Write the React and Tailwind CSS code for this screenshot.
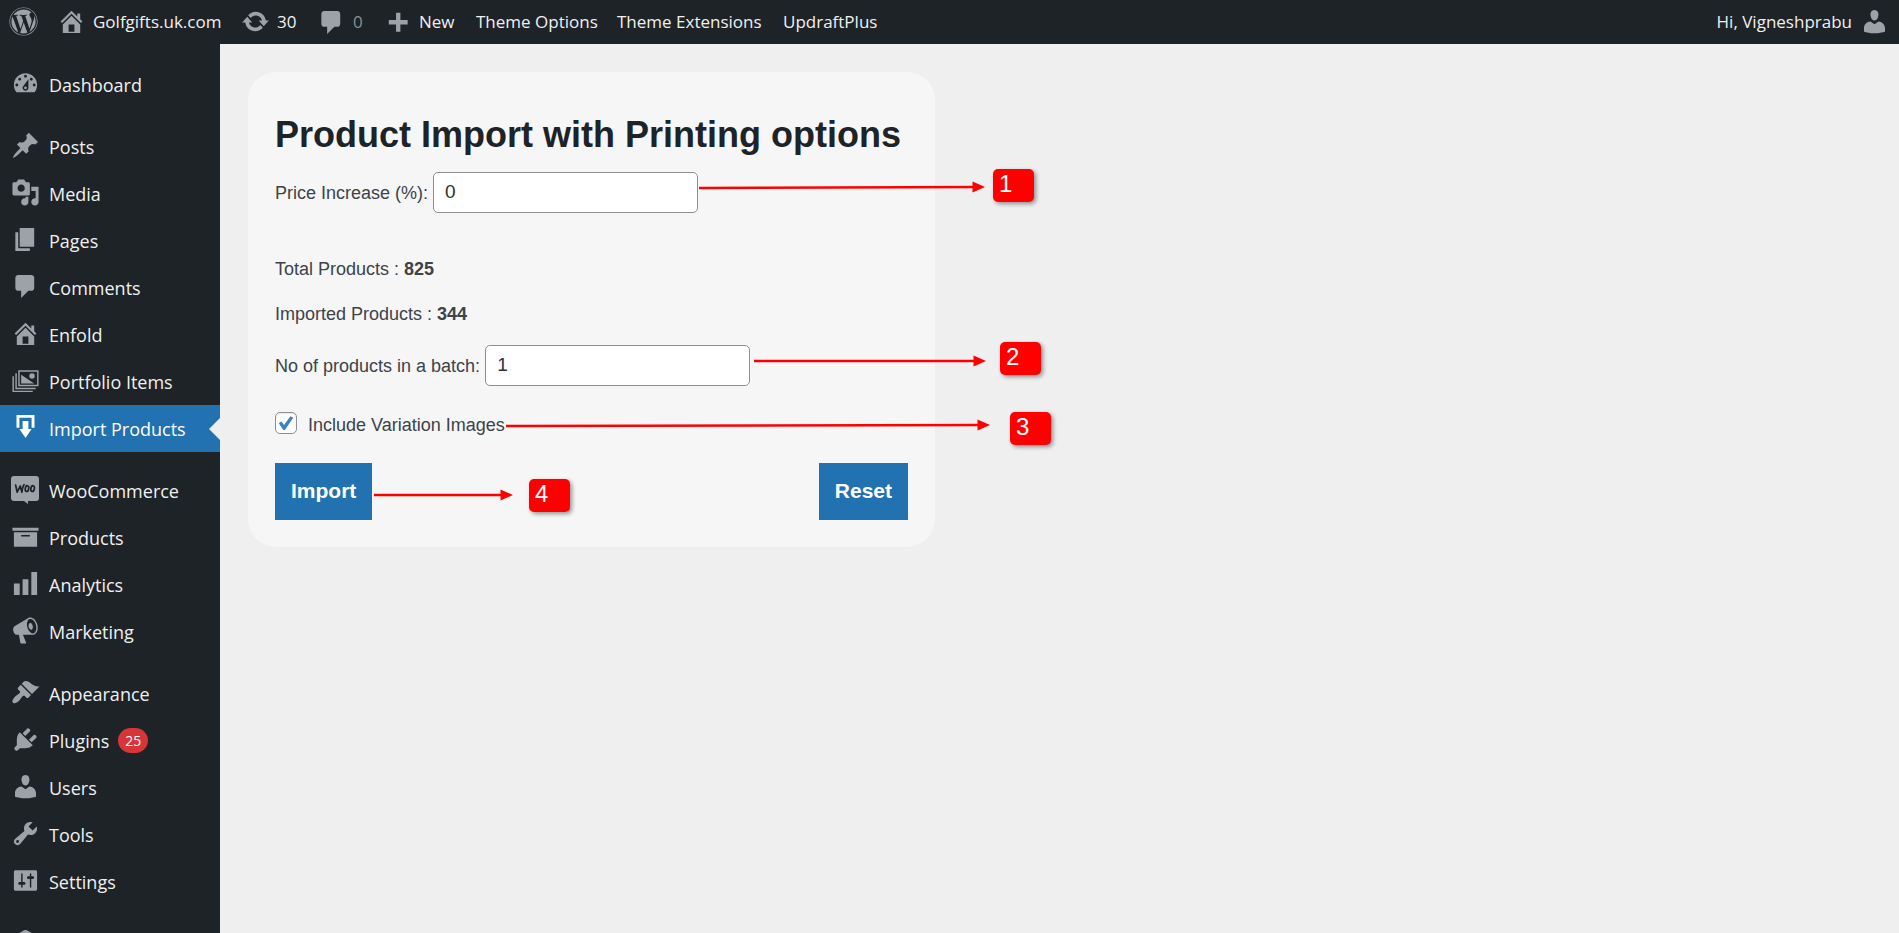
import { useState } from 'react';
import { FaWordpress } from 'react-icons/fa';

const ICONS = {
  dashboard:
    'M3.76 16h12.48c1.1-1.37 1.76-3.11 1.76-5 0-4.42-3.58-8-8-8s-8 3.58-8 8c0 1.89.66 3.63 1.76 5zM10 4c.55 0 1 .45 1 1s-.45 1-1 1-1-.45-1-1 .45-1 1-1zM6 6c.55 0 1 .45 1 1s-.45 1-1 1-1-.45-1-1 .45-1 1-1zm8 0c.55 0 1 .45 1 1s-.45 1-1 1-1-.45-1-1 .45-1 1-1zm-5.37 5.55L12 7v6c0 1.1-.9 2-2 2s-2-.9-2-2c0-.57.24-1.08.63-1.45zM4 10c.55 0 1 .45 1 1s-.45 1-1 1-1-.45-1-1 .45-1 1-1zm12 0c.55 0 1 .45 1 1s-.45 1-1 1-1-.45-1-1 .45-1 1-1zm-5 3c0-.55-.45-1-1-1s-1 .45-1 1 .45 1 1 1 1-.45 1-1z',
  post: 'M10.44 3.02l1.82-1.82 6.36 6.35-1.83 1.82c-1.05-.68-2.48-.57-3.41.36l-.75.75c-.92.93-1.04 2.35-.35 3.41l-1.83 1.82-2.41-2.41-2.8 2.79c-.42.42-3.38 2.71-3.8 2.29s1.86-3.39 2.28-3.81l2.79-2.79L4.1 9.36l1.83-1.82c1.05.69 2.48.57 3.4-.36l.75-.75c.93-.92 1.05-2.35.36-3.41z',
  media:
    'M13 11V4c0-.55-.45-1-1-1h-1.67L9 1H5L3.67 3H2c-.55 0-1 .45-1 1v7c0 .55.45 1 1 1h10c.55 0 1-.45 1-1zM7 4.5c1.38 0 2.5 1.12 2.5 2.5S8.38 9.5 7 9.5 4.5 8.38 4.5 7 5.62 4.5 7 4.5zM14 6h5v10.5c0 1.38-1.12 2.5-2.5 2.5S14 17.88 14 16.5s1.12-2.5 2.5-2.5c.17 0 .34.02.5.05V9h-3V6zm-4 8.05V13h2v3.5c0 1.38-1.12 2.5-2.5 2.5S7 17.88 7 16.5 8.12 14 9.5 14c.17 0 .34.02.5.05z',
  page: 'M6 15V2h10v13H6zm-1 1h8v2H3V5h2v11z',
  comment: 'M5 2h9c1.1 0 2 .9 2 2v7c0 1.1-.9 2-2 2h-2l-5 5v-5H5c-1.1 0-2-.9-2-2V4c0-1.1.9-2 2-2z',
  home: 'M16 8.5l1.53 1.53-1.06 1.06L10 4.6l-6.47 6.49-1.06-1.06L10 2.5l4 4v-2h2v4zm-6-2.46l6 5.99V18H4v-5.97zM12 17v-5H8v5h4z',
  images:
    'M5 3h14v11H5V3zm13 10V4H6v9h12zM7 6l9 6H7V6zm7.5-1a1.9 1.9 0 1 1 0 3.8a1.9 1.9 0 1 1 0-3.8zM3 5h1v10h13v1H3V5zM1 7h1v10h13v1H1V7z',
  importBox: 'M3.8 1.4h12.4v8.7h-2V3.3H5.8v6.8h-2zM8 5.500h4v5.500h2.200L10 17.200 5.800 11H8z',
  archive: 'M19 4v2H1V4h18zM2 7h16v10H2V7zm11 3V9H7v1h6z',
  chart: 'M18 18V2h-4v16h4zm-6 0V7H8v11h4zm-6 0v-8H2v8h4z',
  megaphone:
    'M18.15 5.94c.46 1.62.38 3.22-.02 4.48-.42 1.28-1.26 2.18-2.3 2.48-.16.06-.26.06-.4.06-.06.02-.12.02-.18.02-.06.02-.14.02-.22.02h-6.8l2.22 5.5c.02.14-.06.26-.14.34-.08.1-.24.16-.34.16H6.95c-.1 0-.26-.06-.34-.16-.08-.08-.16-.2-.14-.34l-1-5.5H4.25l-.02-.02c-.5.06-1.08-.18-1.54-.62s-.88-1.08-1.06-1.88c-.24-.8-.2-1.56-.02-2.2.18-.62.58-1.08 1.06-1.3l.02-.02 9-5.4c.1-.06.18-.1.24-.16.06-.04.14-.08.24-.12.16-.08.28-.12.5-.18 1.04-.3 2.24.1 3.22.98s1.84 2.24 2.26 3.86zm-2.58 5.98h-.02c.4-.1.74-.34 1.04-.7.58-.7.86-1.76.86-3.04 0-.64-.1-1.3-.28-1.98-.34-1.36-1.02-2.5-1.78-3.24s-1.68-1.1-2.46-.88c-.82.22-1.4.96-1.7 2-.32 1.04-.28 2.36.06 3.72.38 1.36 1 2.5 1.8 3.24.78.74 1.62 1.1 2.48.88zm-2.54-7.08c.22-.04.42-.02.62.04.38.16.76.48 1.02 1s.42 1.2.42 1.78c0 .3-.04.56-.12.8-.18.48-.44.84-.86.94-.34.1-.8-.06-1.14-.4s-.64-.86-.78-1.5c-.18-.62-.12-1.24.02-1.72s.48-.84.82-.94z',
  brush:
    'M14.48 11.06L7.41 3.99l1.5-1.5c.5-.56 2.3-.47 3.51.32 1.21.8 1.43 1.28 2.91 2.1 1.18.64 2.45 1.26 4.45.85zm-.71.71L6.7 4.7 4.93 6.47c-.39.39-.39 1.02 0 1.41l1.06 1.06c.39.39.39 1.03 0 1.42-.6.6-1.43 1.11-2.21 1.69-.35.26-.7.53-1.01.84C1.43 14.23.4 16.08 1.4 17.07c.99 1 2.84-.03 4.18-1.36.31-.31.58-.66.85-1.02.57-.78 1.08-1.61 1.69-2.21.39-.39 1.02-.39 1.41 0l1.06 1.06c.39.39 1.02.39 1.41 0z',
  plug: 'M13.11 4.36L9.87 7.6 8 5.73l3.24-3.24c.35-.34 1.05-.2 1.56.32.52.51.66 1.21.31 1.55zm-8 1.77l.91-1.12 9.01 9.01-1.19.84c-.71.71-2.63 1.16-3.82 1.16H6.14L4.9 17.26c-.59.59-1.54.59-2.12 0-.59-.58-.59-1.53 0-2.12l1.24-1.24v-3.88c0-1.13.4-3.19 1.09-3.89zm7.26 3.97l3.24-3.24c.34-.35 1.04-.21 1.55.31.52.51.66 1.21.31 1.55l-3.24 3.25z',
  user: 'M10 9.25c-2.27 0-2.73-3.44-2.73-3.44C7 4.02 7.82 2 9.97 2c2.16 0 2.98 2.02 2.71 3.81 0 0-.41 3.44-2.68 3.44zm0 2.57L12.72 10c2.39 0 4.52 2.33 4.52 4.53v2.49s-3.65 1.13-7.24 1.13c-3.65 0-7.24-1.13-7.24-1.13v-2.49c0-2.25 1.94-4.48 4.47-4.48z',
  wrench:
    'M16.68 9.77c-1.34 1.34-3.3 1.67-4.95.99l-5.41 6.52c-.99.99-2.59.99-3.58 0s-.99-2.59 0-3.57l6.52-5.42c-.68-1.65-.35-3.61.99-4.95 1.28-1.28 3.12-1.62 4.72-1.06l-2.89 2.89 2.82 2.82 2.86-2.87c.53 1.58.18 3.39-1.08 4.65zM3.81 16.21c.4.39 1.04.39 1.43 0 .4-.4.4-1.04 0-1.43-.39-.4-1.03-.4-1.43 0-.39.39-.39 1.03 0 1.43z',
  settings:
    'M18 16V4c0-.55-.45-1-1-1H3c-.55 0-1 .45-1 1v12c0 .55.45 1 1 1h14c.55 0 1-.45 1-1zM8 11h1c.55 0 1 .45 1 1s-.45 1-1 1H8v1.5c0 .28-.22.5-.5.5s-.5-.22-.5-.5V13H6c-.55 0-1-.45-1-1s.45-1 1-1h1V5.5c0-.28.22-.5.5-.5s.5.22.5.5V11zm5-2h-1c-.55 0-1-.45-1-1s.45-1 1-1h1V5.5c0-.28.22-.5.5-.5s.5.22.5.5V7h1c.55 0 1 .45 1 1s-.45 1-1 1h-1v5.5c0 .28-.22.5-.5.5s-.5-.22-.5-.5V9z',
  update:
    'M10.2 3.28c3.53 0 6.43 2.61 6.92 6h2.08l-3.5 4-3.5-4h2.32c-.45-1.97-2.21-3.45-4.32-3.45-1.45 0-2.73.71-3.54 1.78L4.95 5.66C6.23 4.2 8.11 3.28 10.2 3.28zm-.4 13.44c-3.52 0-6.43-2.61-6.92-6H.8l3.5-4c1.17 1.33 2.33 2.67 3.5 4H5.48c.45 1.97 2.21 3.45 4.32 3.45 1.45 0 2.73-.71 3.54-1.78l1.71 1.95c-1.28 1.46-3.15 2.38-5.25 2.38z',
  plus: 'M17 9v3h-5v5H9v-5H4V9h5V4h3v5h5z',
  hexagon: 'M9 1.600q1-.6 2 0l6 3.400v9l-7 4-7-4V5z',
};

function Icon({ name }) {
  return (
    <svg viewBox="0 0 20 20" className="size-[29px] shrink-0" fill="currentColor" fillRule="evenodd" aria-hidden="true">
      <path d={ICONS[name]} />
    </svg>
  );
}

function WooIcon() {
  return (
    <svg viewBox="0 0 28 28" className="size-7 shrink-0" aria-hidden="true">
      <path d="M3 0h22a3 3 0 0 1 3 3v19a3 3 0 0 1-3 3h-8v3l-4-3H3a3 3 0 0 1-3-3V3a3 3 0 0 1 3-3z" fill="currentColor" />
      <g fill="none" stroke="#1d2327" strokeWidth="1.7" strokeLinecap="round" strokeLinejoin="round">
        <path d="M4.600 9l1.600 7.200L9.300 10l1.600 6.200c.2-3 .8-5.600 2.200-7.600" />
        <ellipse cx="16" cy="12.600" rx="1.700" ry="2.900" transform="rotate(12 16 12.600)" />
        <ellipse cx="21.600" cy="12.600" rx="1.700" ry="2.900" transform="rotate(12 21.600 12.600)" />
      </g>
    </svg>
  );
}

const MENU = [
  [{ label: 'Dashboard', icon: 'dashboard' }],
  [
    { label: 'Posts', icon: 'post' },
    { label: 'Media', icon: 'media' },
    { label: 'Pages', icon: 'page' },
    { label: 'Comments', icon: 'comment' },
    { label: 'Enfold', icon: 'home' },
    { label: 'Portfolio Items', icon: 'images' },
    { label: 'Import Products', icon: 'importBox', current: true },
  ],
  [
    { label: 'WooCommerce', icon: 'woo' },
    { label: 'Products', icon: 'archive' },
    { label: 'Analytics', icon: 'chart' },
    { label: 'Marketing', icon: 'megaphone' },
  ],
  [
    { label: 'Appearance', icon: 'brush' },
    { label: 'Plugins', icon: 'plug', count: 25 },
    { label: 'Users', icon: 'user' },
    { label: 'Tools', icon: 'wrench' },
    { label: 'Settings', icon: 'settings' },
  ],
];

function MenuItem({ item }) {
  return (
    <li>
      <a
        href="#"
        aria-current={item.current ? 'page' : undefined}
        className={
          item.current
            ? 'relative flex h-[47px] items-center gap-[9px] bg-[#2271b1] pl-2.5 text-white'
            : 'flex h-[47px] items-center gap-[9px] pl-2.5 text-[#f0f0f1]'
        }
      >
        <span
          className={
            item.current
              ? 'flex w-[30px] justify-center pb-0.5 text-white'
              : 'flex w-[30px] justify-center pb-0.5 text-[#9ca2a7]'
          }
        >
          {item.icon === 'woo' ? <WooIcon /> : <Icon name={item.icon} />}
        </span>
        <span>{item.label}</span>
        {item.count && (
          <span className="flex h-[25px] w-[30px] items-center justify-center rounded-full bg-[#d63638] text-sm text-white">
            {item.count}
          </span>
        )}
        {item.current && (
          <svg viewBox="0 0 11 22" className="absolute right-0 h-[22px] w-[11px]" fill="#efefef" aria-hidden="true">
            <path d="M11 0v22L0 11z" />
          </svg>
        )}
      </a>
    </li>
  );
}

function AdminBar() {
  return (
    <header className="flex h-11 shrink-0 items-center justify-between bg-[#1d2327] text-[17px] text-[#f0f0f1]">
      <nav className="flex items-center whitespace-nowrap" aria-label="Toolbar">
        <a href="#" aria-label="About WordPress" className="ml-[9px] pb-0.5 text-[#9ca2a7]">
          <FaWordpress className="size-[29px]" />
        </a>
        <a href="#" className="ml-[19px] flex w-[168px] items-center gap-[7px]">
          <span className="pb-0.5 text-[#9ca2a7]"><Icon name="home" /></span>
          Golfgifts.uk.com
        </a>
        <a href="#" className="ml-4 flex w-[62px] items-center gap-[7px]">
          <span className="pb-0.5 text-[#9ca2a7]"><Icon name="update" /></span>
          30
        </a>
        <a href="#" className="ml-3.5 flex w-[54px] items-center gap-[7px] text-[#9ca2a7]">
          <Icon name="comment" />
          <span className="text-[#8c8f94]">0</span>
        </a>
        <a href="#" className="ml-3 flex w-[93px] items-center gap-[7px]">
          <span className="pb-0.5 text-[#9ca2a7]"><Icon name="plus" /></span>
          New
        </a>
        <a href="#" className="w-[141px]">Theme Options</a>
        <a href="#" className="w-[166px]">Theme Extensions</a>
        <a href="#">UpdraftPlus</a>
      </nav>
      <a href="#" className="mr-2.5 flex items-center gap-2 whitespace-nowrap">
        Hi, Vigneshprabu
        <span className="pb-0.5 text-[#9ca2a7]"><Icon name="user" /></span>
      </a>
    </header>
  );
}

const ARROWS = [
  { x1: 451, y1: 116, x2: 737, y2: 115 },
  { x1: 506, y1: 289, x2: 738, y2: 289 },
  { x1: 258, y1: 354, x2: 742, y2: 353 },
  { x1: 126, y1: 423, x2: 265, y2: 423 },
];

function Callouts() {
  const badge =
    'absolute h-[33px] w-[41px] rounded-[5px] bg-[#ff0000] pl-1.5 text-2xl leading-[30px] text-white shadow-[2px_2px_4px_rgba(0,0,0,0.4)]';
  return (
    <div className="pointer-events-none absolute left-0 top-0">
      <svg width="820" height="475" viewBox="0 0 820 475" className="absolute left-0 top-0 max-w-none" aria-hidden="true">
        {ARROWS.map((a) => (
          <g key={a.y1} fill="#ff0000" stroke="none">
            <line x1={a.x1} y1={a.y1} x2={a.x2 - 10} y2={a.y2} stroke="#ff0000" strokeWidth="2.4" />
            <path d={`M${a.x2} ${a.y2}l-12.500 -5.500v11z`} />
          </g>
        ))}
      </svg>
      <span className={`${badge} left-[745px] top-[97px]`}>1</span>
      <span className={`${badge} left-[752px] top-[270px]`}>2</span>
      <span className={`${badge} left-[762px] top-[340px]`}>3</span>
      <span className={`${badge} left-[281px] top-[407px]`}>4</span>
    </div>
  );
}

function ImportForm() {
  const [price, setPrice] = useState('0');
  const [batch, setBatch] = useState('1');
  const [images, setImages] = useState(true);
  const field =
    'h-[41px] w-[265px] rounded-[5px] border border-[#8c8f94] bg-white px-[11px] pb-0.5 text-[19px] text-[#2c3338] outline-none';
  const button = 'h-[57px] bg-[#2271b1] px-4 pb-0.5 text-[21px] font-bold text-white';

  return (
    <form
      onSubmit={(e) => e.preventDefault()}
      className="w-[687px] rounded-[28px] bg-[#f6f6f6] px-[27px] pb-[27px] pt-10 text-lg leading-[27px] text-[#3c434a]"
    >
      <h1 className="text-4xl font-bold leading-[45px] text-[#1d2327]">Product Import with Printing options</h1>
      <div className="mt-[15px] flex items-center gap-[5px]">
        <label htmlFor="price" className="pt-0.5">Price Increase (%):</label>
        <input id="price" type="text" value={price} onChange={(e) => setPrice(e.target.value)} className={field} />
      </div>
      <p className="mt-[43px]">Total Products : <strong>825</strong></p>
      <p className="mt-[18px]">Imported Products : <strong>344</strong></p>
      <div className="mt-[17px] flex items-center gap-[5px]">
        <label htmlFor="batch" className="pt-0.5">No of products in a batch:</label>
        <input id="batch" type="text" value={batch} onChange={(e) => setBatch(e.target.value)} className={field} />
      </div>
      <div className="mt-[26px] flex items-start gap-[11px]">
        <span className="relative flex size-[22px]">
          <input
            id="images"
            type="checkbox"
            checked={images}
            onChange={(e) => setImages(e.target.checked)}
            className="size-[22px] appearance-none rounded-[5px] border border-[#8c8f94] bg-white shadow-[inset_0_1px_2px_rgba(0,0,0,0.1)]"
          />
          {images && (
            <svg viewBox="0 0 22 22" className="pointer-events-none absolute inset-0 size-[22px]" aria-hidden="true">
              <path d="M3.800 11.200l2.600-1.700 2.700 3.400 6.300-8.600 2.800 1.500-8.300 12.200h-1.600z" fill="#3582c4" />
            </svg>
          )}
        </span>
        <label htmlFor="images">Include Variation Images</label>
      </div>
      <div className="mt-6 flex justify-between">
        <button type="submit" className={button}>Import</button>
        <button type="button" className={button}>Reset</button>
      </div>
    </form>
  );
}

export default function App() {
  return (
    <div className="flex h-screen flex-col overflow-hidden bg-[#efefef] font-['Open_Sans','Noto_Sans',sans-serif] text-lg">
      <AdminBar />
      <div className="flex min-h-0 flex-1">
        <aside className="w-[220px] shrink-0 overflow-hidden bg-[#1d2327] pt-[17px]">
          <nav className="flex flex-col gap-[15px]" aria-label="Main menu">
            {MENU.map((group) => (
              <ul key={group[0].label}>
                {group.map((item) => (
                  <MenuItem key={item.label} item={item} />
                ))}
              </ul>
            ))}
            <div className="flex h-[47px] items-center pl-2.5 text-[#9ca2a7]">
              <span className="flex w-[30px] justify-center pb-0.5"><Icon name="hexagon" /></span>
            </div>
          </nav>
        </aside>
        <main className="min-w-0 flex-1 pl-7 pt-7 font-['Liberation_Sans',Arial,sans-serif]">
          <div className="relative">
            <ImportForm />
            <Callouts />
          </div>
        </main>
      </div>
    </div>
  );
}
